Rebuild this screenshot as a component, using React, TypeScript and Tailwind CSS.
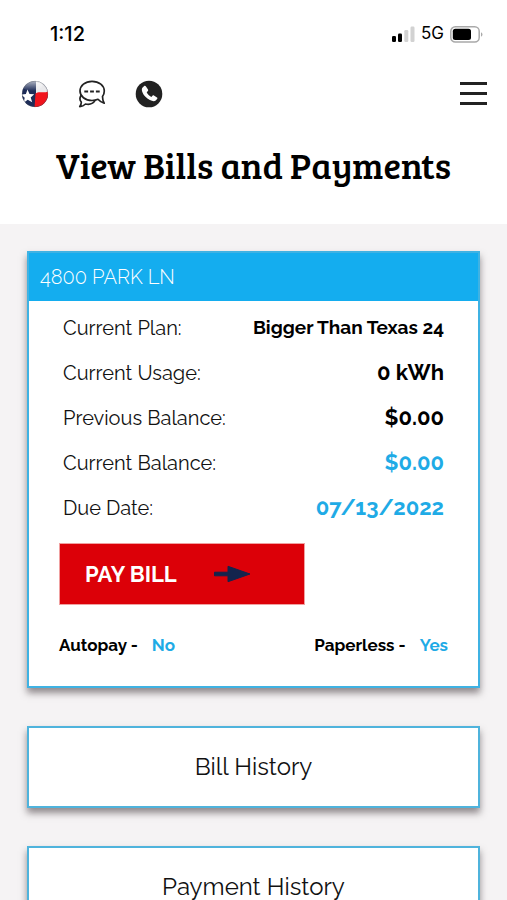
import React from "react";

type Row = { label: string; value: string; style: string };

const rows: Row[] = [
  { label: "Current Plan:", value: "Bigger Than Texas 24", style: "text-[19px] text-black" },
  { label: "Current Usage:", value: "0 kWh", style: "text-[22px] text-black" },
  { label: "Previous Balance:", value: "$0.00", style: "text-[22px] text-black" },
  { label: "Current Balance:", value: "$0.00", style: "text-[22px] text-[#1fabe6]" },
  { label: "Due Date:", value: "07/13/2022", style: "text-[22px] text-[#1fabe6]" },
];

function StatusBar() {
  return (
    <div className="flex h-[68px] items-center justify-between pr-6 pl-[50px] font-['Inter',sans-serif] text-black">
      <span className="text-[20px] font-medium">1:12</span>
      <div className="flex items-center">
        <svg width="23" height="16" viewBox="0 0 23 16" aria-hidden="true">
          <rect x="0" y="10" width="4" height="6" rx="1.2" fill="#000" />
          <rect x="6" y="7.5" width="4" height="8.5" rx="1.2" fill="#000" />
          <rect x="12.3" y="4" width="4" height="12" rx="1.2" fill="#d2d2d2" />
          <rect x="18.5" y="0.5" width="4" height="15.5" rx="1.2" fill="#d2d2d2" />
        </svg>
        <span className="ml-[6px] text-[17px]">5G</span>
        <svg className="ml-[6px]" width="33" height="17" viewBox="0 0 33 17" aria-hidden="true">
          <rect x="0.8" y="0.8" width="28.4" height="15.2" rx="4.5" fill="#fff" stroke="#a9a9a9" strokeWidth="1.5" />
          <rect x="2.8" y="2.8" width="18.2" height="11.2" rx="2.5" fill="#000" />
          <path d="M31 6.3c2 .8 2 3.6 0 4.4z" fill="#a9a9a9" />
        </svg>
      </div>
    </div>
  );
}

function TexasIcon() {
  return (
    <svg width="28" height="28" viewBox="0 0 28 28" aria-hidden="true">
      <defs>
        <clipPath id="globe">
          <circle cx="14" cy="14" r="13" />
        </clipPath>
        <linearGradient id="gloss" x1="0" y1="0" x2="0" y2="1">
          <stop offset="0" stopColor="#fff" stopOpacity="0.9" />
          <stop offset="1" stopColor="#fff" stopOpacity="0" />
        </linearGradient>
      </defs>
      <g clipPath="url(#globe)">
        <rect width="28" height="28" fill="#1d2c58" />
        <path d="M15 0h13v14H15z" fill="#e9e9ec" />
        <path d="M14.5 13.5C18 10.500 23 14 28 11v17H13.5z" fill="#f1141d" />
        <ellipse cx="11" cy="4" rx="11" ry="7" fill="url(#gloss)" />
        <path d="M6.5 9.500 8.500 14l4.700.2-3.500 3.200 1.500 4.800-4.500-2.500-4 3 1-5-3.400-3.200 4.600-.4z" fill="#fff" />
      </g>
      <circle cx="14" cy="14" r="12.8" fill="none" stroke="#555" strokeOpacity="0.35" strokeWidth="0.8" />
    </svg>
  );
}

function ChatIcon() {
  return (
    <svg width="28" height="28" viewBox="0 0 28 28" fill="none" stroke="#222" strokeWidth="1.7" strokeLinejoin="round" strokeLinecap="round" aria-hidden="true">
      <path d="M14 1.3C7.2 1.3 2 5.6 2 11s5.200 9.500 12 9.500c2.200 0 4.200-.4 6-1.200 1.700 2 3.900 3.300 6.200 3.900-1.300-2-1.700-4.200-1.700-6.700 1.200-1.600 1.800-3.400 1.800-5.500 0-5.400-5.200-9.700-12.300-9.700z" />
      <path d="M3 15.500C1.300 18.300 1.700 20.300 3.300 22c.1 1.700-.5 3.200-1.500 4.600 2.300-.2 4.200-1.100 5.700-2.600 4.200.9 7.500-.4 9.300-3.100" />
      <path d="M6.300 11.500h3.800m2 0h3.800m2 0h3.800" strokeLinecap="butt" strokeWidth="2" />
    </svg>
  );
}

function PhoneIcon() {
  return (
    <svg width="28" height="28" viewBox="0 0 28 28" aria-hidden="true">
      <circle cx="14" cy="14" r="13.300" fill="#222" />
      <path d="M9.200 6.100 7.400 7.700C6 9.300 7.300 13.700 10.700 17.100s7.900 4.900 9.700 3.700l1.700-1.800c.5-.5.4-1.100-.1-1.500l-3.100-2c-.5-.3-1-.2-1.400.2l-1.200 1.200c-1.900-.9-3.700-2.700-4.600-4.700l1.200-1.200c.4-.4.4-.9.100-1.400l-2.200-3.300c-.4-.6-1.100-.7-1.600-.2z" fill="#fff" />
    </svg>
  );
}

export default function App() {
  return (
    <div className="min-h-screen bg-[#f5f3f4] font-['Raleway','Lato',sans-serif] text-[#111]">
      <header className="bg-white pb-[35px]">
        <StatusBar />
        <nav className="flex h-[51px] items-center justify-between pr-5 pl-[21px]" aria-label="Main">
          <div className="flex items-center gap-[29px]">
            <a href="#home" aria-label="Home"><TexasIcon /></a>
            <a href="#chat" aria-label="Chat"><ChatIcon /></a>
            <a href="#call" aria-label="Call"><PhoneIcon /></a>
          </div>
          <button type="button" aria-label="Menu" className="flex w-[27px] flex-col gap-[7px]">
            <span className="h-[3px] w-full bg-[#222]" />
            <span className="h-[3px] w-full bg-[#222]" />
            <span className="h-[3px] w-full bg-[#222]" />
          </button>
        </nav>
        <h1 className="pt-[22px] text-center font-['Bree_Serif','DejaVu_Serif',serif] text-[36px] leading-[48px] text-black">
          View Bills and Payments
        </h1>
      </header>

      <main className="flex flex-col gap-[38px] px-[27px] pt-[27px] pb-10">
        <section className="border-2 border-[#3fb2e3] bg-white shadow-[0_5px_7px_rgba(60,50,55,0.55)]">
          <h2 className="bg-[#14adef] px-[11px] text-[20px] leading-[48px] font-light text-white">
            4800 PARK LN
          </h2>
          <dl className="px-[34px] pt-1">
            {rows.map((row) => (
              <div key={row.label} className="flex h-[45px] items-center justify-between">
                <dt className="text-[20px]">{row.label}</dt>
                <dd className={`font-bold ${row.style}`}>{row.value}</dd>
              </div>
            ))}
          </dl>
          <div className="px-[30px] pt-[13px] pb-[29px]">
            <button type="button" className="flex h-[62px] w-[246px] items-center border border-[#f0a0a0] bg-[#dc0008] pl-[25px] text-[22px] font-bold text-white">
              PAY BILL
              <svg className="ml-[36px]" width="38" height="18" viewBox="0 0 38 18" aria-hidden="true">
                <path d="M1.500 7.200H15V1.300L37 9 15 16.700v-5.900H1.500z" fill="#14244d" stroke="#14244d" strokeLinejoin="round" />
              </svg>
            </button>
            <div className="mt-[28px] flex justify-between text-[17px] leading-6 font-bold text-black">
              <p>Autopay - <a href="#autopay" className="ml-[10px] text-[#1fabe6]">No</a></p>
              <p>Paperless - <a href="#paperless" className="ml-[10px] text-[#1fabe6]">Yes</a></p>
            </div>
          </div>
        </section>
        <button type="button" className="h-[82px] border-2 border-[#4fb3dc] bg-white text-[24px] shadow-[0_5px_7px_rgba(60,50,55,0.55)]">
          Bill History
        </button>
        <button type="button" className="h-[82px] border-2 border-[#4fb3dc] bg-white text-[24px] shadow-[0_5px_7px_rgba(60,50,55,0.55)]">
          Payment History
        </button>
      </main>
    </div>
  );
}
